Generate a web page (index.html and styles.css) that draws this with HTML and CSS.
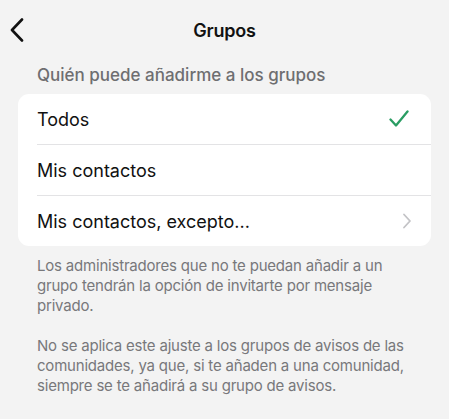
FILE: index.html
```html
<!DOCTYPE html>
<html lang="es">
<head>
    <meta charset="UTF-8">
    <meta name="viewport" content="width=device-width, initial-scale=1.0">
    <title>Grupos</title>
    <link rel="stylesheet" href="styles.css">
</head>
<body>
    <div class="navbar">
        <button class="back-btn" aria-label="Atrás">
            <svg width="14" height="24" viewBox="0 0 14 24">
                <path d="M12 1.5 L2 12 L12 22.5" fill="none" stroke="#111" stroke-width="2.6" stroke-linecap="round" stroke-linejoin="round"/>
            </svg>
        </button>
        <h1 class="title">Grupos</h1>
    </div>

    <div class="section">
        <div class="section-label">Quién puede añadirme a los grupos</div>

        <div class="list">
            <div class="row">
                <span>Todos</span>
                <svg class="check" width="20" height="18" viewBox="0 0 20 18">
                    <path d="M1.5 9.5 L7 15.5 L18.5 1.5" fill="none" stroke="#2a9d63" stroke-width="2.3" stroke-linecap="round" stroke-linejoin="round"/>
                </svg>
            </div>
            <div class="row">
                <span>Mis contactos</span>
            </div>
            <div class="row">
                <span>Mis contactos, excepto...</span>
                <svg class="chevron" width="10" height="16" viewBox="0 0 10 16">
                    <path d="M2 1.5 L8 8 L2 14.5" fill="none" stroke="#c3c3c6" stroke-width="1.8" stroke-linecap="round" stroke-linejoin="round"/>
                </svg>
            </div>
        </div>

        <div class="notes">
            <p>Los administradores que no te puedan añadir a un grupo tendrán la opción de invitarte por mensaje privado.</p>
            <p>No se aplica este ajuste a los grupos de avisos de las comunidades, ya que, si te añaden a una comunidad, siempre se te añadirá a su grupo de avisos.</p>
        </div>
    </div>
</body>
</html>
```

FILE: styles.css
```css
body {
    margin: 0;
    padding: 0;
    background-color: #f3f3f3;
    font-family: Inter, "Noto Sans", sans-serif;
    color: #111;
}

.navbar {
    position: relative;
    height: 60px;
    display: flex;
    align-items: center;
    justify-content: center;
}

.back-btn {
    position: absolute;
    left: 10px;
    top: 18px;
    padding: 0;
    border: none;
    background: none;
    display: flex;
}

.title {
    margin: 0;
    font-size: 18px;
    font-weight: 600;
    letter-spacing: -0.2px;
}

.section {
    padding: 0 18px;
}

.section-label {
    margin-top: 5px;
    padding-left: 19px;
    font-size: 17px;
    line-height: 20px;
    font-weight: 500;
    color: #6e6e70;
}

.list {
    margin-top: 9px;
    background-color: #fff;
    border-radius: 11px;
    padding-left: 19px;
}

.row {
    height: 50px;
    display: flex;
    align-items: center;
    justify-content: space-between;
    padding-right: 20px;
    font-size: 18px;
    border-bottom: 1px solid #e3e3e5;
}

.row:last-child {
    border-bottom: none;
}

.check {
    margin-right: 2px;
}

.chevron {
    margin-right: -1px;
}

.notes {
    margin-top: 10px;
    padding: 0 19px;
    font-size: 15px;
    line-height: 20px;
    letter-spacing: -0.2px;
    color: #78787b;
}

.notes p {
    margin: 0 0 20px;
}
```
